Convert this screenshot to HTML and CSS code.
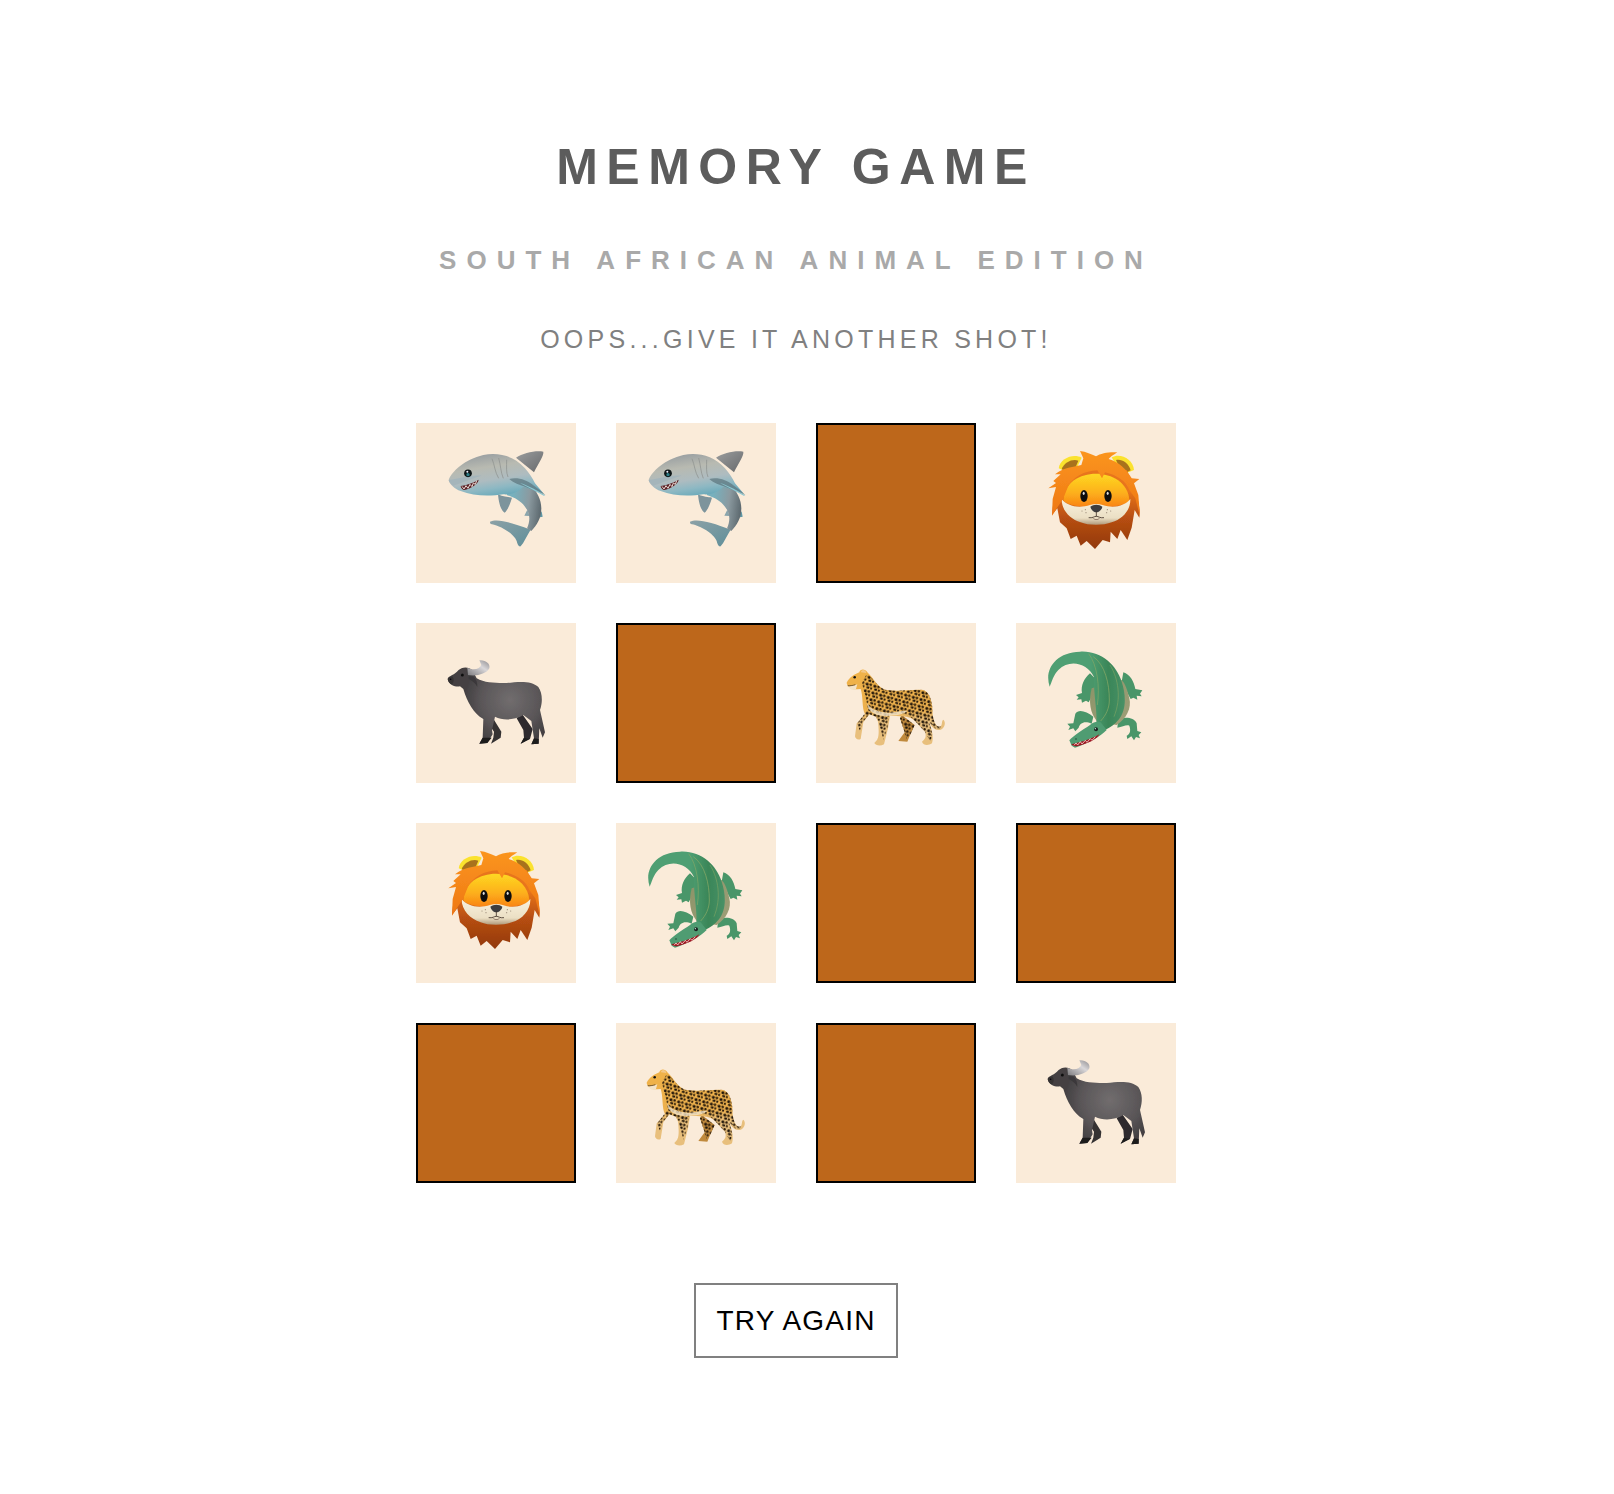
FILE: index.html
```html
<!DOCTYPE html>
<html lang="en">
<head>
<meta charset="utf-8">
<title>Memory Game</title>
<link rel="stylesheet" href="styles.css">
</head>
<body>
<svg class="sprite" xmlns="http://www.w3.org/2000/svg" aria-hidden="true">
  <defs>
    <filter id="soft" x="-5%" y="-5%" width="110%" height="110%"><feGaussianBlur stdDeviation="1"/></filter>
    <linearGradient id="sharkBody" gradientUnits="userSpaceOnUse" x1="220" y1="115" x2="240" y2="245">
      <stop offset="0" stop-color="#989ea1"/><stop offset=".32" stop-color="#b8bab1"/><stop offset=".62" stop-color="#aebcc0"/><stop offset=".82" stop-color="#8db8c3"/><stop offset="1" stop-color="#6caaba"/>
    </linearGradient>
    <linearGradient id="sharkTurn" gradientUnits="userSpaceOnUse" x1="310" y1="250" x2="395" y2="260">
      <stop offset="0" stop-color="#77b0bd"/><stop offset=".55" stop-color="#8b9aa0"/><stop offset="1" stop-color="#5e6a70"/>
    </linearGradient>
    <linearGradient id="sharkFin" x1="0" y1="0" x2="1" y2="1">
      <stop offset="0" stop-color="#9b9d9e"/><stop offset="1" stop-color="#67696b"/>
    </linearGradient>
    <linearGradient id="sharkTail" x1="0" y1="0" x2="1" y2="1">
      <stop offset="0" stop-color="#8ca1a6"/><stop offset="1" stop-color="#5f8f9a"/>
    </linearGradient>
    <linearGradient id="lionUp" x1="0" y1="0" x2="0" y2="1">
      <stop offset="0" stop-color="#fb951f"/><stop offset="1" stop-color="#ee7714"/>
    </linearGradient>
    <linearGradient id="lionLow" gradientUnits="userSpaceOnUse" x1="0" y1="230" x2="0" y2="400">
      <stop offset="0" stop-color="#e8741a"/><stop offset=".45" stop-color="#b84f12"/><stop offset="1" stop-color="#93390e"/>
    </linearGradient>
    <linearGradient id="lionFace" gradientUnits="userSpaceOnUse" x1="0" y1="170" x2="0" y2="285">
      <stop offset="0" stop-color="#fedc22"/><stop offset=".55" stop-color="#fdb01c"/><stop offset="1" stop-color="#f87a12"/>
    </linearGradient>
    <linearGradient id="lionMuzzle" gradientUnits="userSpaceOnUse" x1="0" y1="255" x2="0" y2="332">
      <stop offset="0" stop-color="#f8f0dc"/><stop offset=".7" stop-color="#ebdfc4"/><stop offset="1" stop-color="#a8906f"/>
    </linearGradient>
    <radialGradient id="buffBody" gradientUnits="userSpaceOnUse" cx="300" cy="255" r="135">
      <stop offset="0" stop-color="#716d6e"/><stop offset=".65" stop-color="#5a5658"/><stop offset="1" stop-color="#444143"/>
    </radialGradient>
    <linearGradient id="buffHorn" x1="0" y1="1" x2="1" y2="0">
      <stop offset="0" stop-color="#7d7b7e"/><stop offset=".6" stop-color="#d9d7d9"/><stop offset="1" stop-color="#8d8b8d"/>
    </linearGradient>
    <linearGradient id="leoBody" gradientUnits="userSpaceOnUse" x1="0" y1="170" x2="0" y2="320">
      <stop offset="0" stop-color="#f0b248"/><stop offset=".75" stop-color="#ecb04e"/><stop offset="1" stop-color="#e8bf7c"/>
    </linearGradient>
    <pattern id="leoSpots" width="24" height="21" patternUnits="userSpaceOnUse" patternTransform="rotate(16)">
      <ellipse cx="6" cy="5" rx="4.8" ry="4" fill="#1c1208"/>
      <ellipse cx="17" cy="4" rx="3.6" ry="4.2" fill="#2a1b0a"/>
      <ellipse cx="11" cy="14" rx="4.6" ry="3.6" fill="#1c1208"/>
      <ellipse cx="21" cy="14" rx="3.2" ry="3.6" fill="#2a1b0a"/>
    </pattern>
    <linearGradient id="crocBody" gradientUnits="userSpaceOnUse" x1="240" y1="0" x2="350" y2="0">
      <stop offset="0" stop-color="#4f9f73"/><stop offset=".5" stop-color="#3a8658"/><stop offset="1" stop-color="#4a9268"/>
    </linearGradient>
    <linearGradient id="crocBelly" x1="0" y1="0" x2="1" y2="1">
      <stop offset="0" stop-color="#8a9368"/><stop offset="1" stop-color="#a09f78"/>
    </linearGradient>

    <symbol id="shark" viewBox="18 24 480 480">
      <g filter="url(#soft)">
        <path d="M318 128C340 114 375 106 400 110C402 122 385 145 372 172Z" fill="url(#sharkFin)"/>
        <path d="M264 238C280 246 295 246 306 248C300 268 293 286 284 293C272 286 266 262 264 238Z" fill="#7d949c"/>
        <path d="M343 302L352 284L359 303Z" fill="#8aa5ac"/>
        <path d="M380 288L395 290L398 305L382 308Z" fill="#5e96a4"/>
        <path d="M240 320C262 310 305 322 362 344C352 360 342 382 332 394C326 396 322 388 320 378C312 356 270 332 246 328C241 327 240 324 240 320Z" fill="url(#sharkTail)"/>
        <path d="M300 215C325 225 345 215 360 205C382 232 394 255 394 280C394 310 380 332 364 348L351 340C362 315 360 295 345 275C332 258 315 248 290 240Z" fill="url(#sharkTurn)"/>
        <path d="M116 195C124 170 165 133 220 120C262 112 310 120 345 160C358 175 368 190 375 205L400 235L340 215C325 230 305 240 280 238C240 244 190 244 152 228C134 222 118 208 116 195Z" fill="url(#sharkBody)"/>
        <path d="M298 192C322 186 350 194 372 212C388 224 398 232 406 240C385 232 365 222 345 215C328 209 312 205 298 192Z" fill="#5f7880" opacity=".75"/>
        <path d="M330 204C356 212 384 228 406 241L401 242C378 230 352 216 330 204Z" fill="#8cc6d0"/>
        <path d="M116 195C150 190 190 178 215 182C180 192 150 205 130 212C122 207 117 200 116 195Z" fill="#a4b5bb"/>
        <g fill="none" stroke="#8d928e" stroke-width="2.2">
          <path d="M246 131C254 150 254 170 266 190"/><path d="M266 129C272 150 272 172 280 190"/><path d="M290 134C290 155 288 172 294 186"/>
        </g>
        <circle cx="174" cy="175" r="11.5" fill="#0b1214"/>
        <circle cx="174" cy="179" r="5" fill="#2e7d86"/>
        <circle cx="172" cy="170" r="3" fill="#eef"/>
        <path d="M152 213C170 210 190 204 206 194C204 208 180 222 162 225C157 224 153 219 152 213Z" fill="#5a1d20"/>
        <path d="M156 214L162 222L168 212L174 220L180 208L186 215L190 204L196 208L200 197" fill="none" stroke="#e9dcd6" stroke-width="3"/>
      </g>
    </symbol>

    <symbol id="lion" viewBox="18 24 480 480">
      <g filter="url(#soft)">
        <path d="M146 160C150 130 190 115 215 128L190 180Z" fill="#fbe22e"/>
        <path d="M155 163C162 140 190 130 205 137L188 178Z" fill="#a8721f"/>
        <path d="M372 165C370 132 330 112 305 127L335 180Z" fill="#fbe22e"/>
        <path d="M362 166C356 142 332 130 318 135L338 178Z" fill="#a8721f"/>
        <path d="M126 300C128 270 134 235 165 165L350 165C385 240 392 280 388 308L374 285L365 338L352 375L332 345L322 372L302 350L300 382L278 375L255 402L230 378L212 392L200 362L182 372L170 340L150 322L142 280Z" fill="url(#lionLow)"/>
        <path d="M160 255C165 150 350 150 358 255C350 285 170 285 160 255Z" fill="url(#lionFace)"/>
        <path d="M155 252C170 272 205 282 240 270C252 266 266 266 278 270C312 282 345 272 361 252C362 285 338 312 305 322C280 332 235 332 212 322C180 312 154 285 155 252Z" fill="url(#lionMuzzle)"/>
        <path d="M115 220L138 204L130 198L152 178L135 178C150 165 170 158 190 155L214 150L220 130L210 108C228 110 245 118 258 124C272 114 300 110 322 112C310 120 300 126 296 132C325 140 352 165 365 190L388 192L372 205L385 240L390 305L376 250L358 225C348 198 320 180 285 172L276 190L262 166C222 168 190 185 174 215L160 250L126 302L128 252L138 216Z" fill="url(#lionUp)"/>
        <ellipse cx="222" cy="243" rx="11" ry="18" fill="#111"/>
        <ellipse cx="294" cy="243" rx="11" ry="18" fill="#111"/>
        <ellipse cx="221" cy="235" rx="3" ry="5" fill="#ddd"/>
        <ellipse cx="293" cy="235" rx="3" ry="5" fill="#ddd"/>
        <path d="M241 275C250 267 268 267 277 275C276 284 266 292 259 292C251 292 243 284 241 275Z" fill="#3d3d40"/>
        <path d="M259 290V304M236 308C248 310 252 304 259 304C266 304 270 310 282 308" fill="none" stroke="#2a1b14" stroke-width="2.2"/>
        <path d="M247 309C253 313 265 313 271 309C265 315 253 315 247 309Z" fill="#4a2a22"/>
        <g fill="#9a8a78"><circle cx="216" cy="288" r="1.8"/><circle cx="226" cy="284" r="1.8"/><circle cx="228" cy="293" r="1.8"/><circle cx="290" cy="293" r="1.8"/><circle cx="292" cy="284" r="1.8"/><circle cx="302" cy="288" r="1.8"/></g>
      </g>
    </symbol>

    <symbol id="buffalo" viewBox="18 24 480 480">
      <g filter="url(#soft)">
        <path d="M335 295L368 342L360 372L332 386L342 368L340 345L320 310Z" fill="#2f2c2e"/>
        <path d="M240 295L274 350L272 368L243 386L250 368L252 350L232 320Z" fill="#343133"/>
        <path d="M113 192C116 182 135 180 145 166C155 155 175 154 187 165L200 190C225 205 260 204 290 204C325 200 365 196 385 216C398 235 398 262 390 285L405 352L398 368L388 340L386 386L364 388L372 370L364 318L340 300C315 315 280 318 255 305L246 345L248 358L232 384L208 386L218 368L220 312C190 295 172 262 160 222L150 214C140 216 118 214 113 192Z" fill="url(#buffBody)"/>
        <path d="M113 192C116 186 122 184 128 185C133 192 132 203 126 208C119 206 114 201 113 192Z" fill="#343133"/>
        <path d="M176 184C190 182 202 190 202 215C195 205 188 198 176 192Z" fill="#3b383a"/>
        <path d="M172 158C192 168 208 162 214 150L208 136C226 134 242 146 238 160C228 178 200 184 174 180Z" fill="url(#buffHorn)"/>
        <path d="M208 386L218 368L245 368L232 384ZM332 386L342 368L358 372ZM364 388L372 370L386 372V386Z" fill="#1e1c1e"/>
        <circle cx="157" cy="180" r="4.5" fill="#111"/>
        <circle cx="122" cy="193" r="2.2" fill="#000"/>
      </g>
    </symbol>

    <symbol id="leopard" viewBox="18 24 480 480">
      <g filter="url(#soft)">
        <path d="M275 300L314 330L298 365L292 380L265 378L284 352L270 310Z" fill="#c08a3e"/>
        <path d="M275 300L314 330L298 365L290 372L284 352L270 310Z" fill="url(#leoSpots)"/>
        <path d="M110 203C118 188 130 180 148 172C150 162 165 160 172 172C190 188 200 215 225 224C265 232 305 222 340 225C360 232 368 262 368 300C372 325 382 340 392 334C398 326 394 318 400 314C408 320 406 340 390 345C372 348 362 330 355 318C365 340 372 365 366 385C355 392 340 392 336 380C345 372 350 365 345 350L312 315C295 300 265 305 240 302L234 340L222 388C212 394 196 392 193 384C202 374 210 372 204 320L198 305L178 298L160 322L152 372C144 376 136 372 135 364L140 325L165 298C155 280 160 245 152 222C140 222 128 226 118 218C114 212 110 208 110 203Z" fill="url(#leoBody)"/>
        <path d="M170 288C175 262 162 232 156 205C162 190 168 178 174 178C190 190 200 215 225 224C265 232 305 222 340 225C360 232 368 262 368 300C372 325 382 340 392 334C396 340 385 345 375 340L355 318C365 340 372 365 360 378L345 350L312 315C295 296 265 292 238 298L232 340L220 374L206 320L198 305L178 298L158 322L150 350L142 325Z" fill="url(#leoSpots)"/>
        <path d="M115 215C125 212 135 212 142 208L138 222C130 228 118 222 115 215Z" fill="#f3e3c8"/>
        <path d="M113 212C122 213 130 211 136 209" stroke="#3c2b1a" stroke-width="2" fill="none"/>
        <path d="M153 172C153 162 167 162 169 174Z" fill="#f2c88a"/>
        <circle cx="134" cy="187" r="3.8" fill="#111"/>
        <path d="M172 265C180 283 205 292 238 294C262 292 278 286 292 288C275 302 235 306 202 300C184 294 172 282 172 265Z" fill="#f3e3c8" opacity=".8"/>
      </g>
    </symbol>

    <symbol id="croc" viewBox="18 24 480 480">
      <g filter="url(#soft)">
        <path d="M340 172C360 178 372 200 376 222L397 226L390 236L395 244L380 242L382 254L370 248L362 252C352 235 345 215 335 200Z" fill="#4a9669"/>
        <path d="M240 175C222 190 212 212 216 234L198 240L206 247L200 254L214 253L216 263L228 257L236 262C248 240 258 220 265 200Z" fill="#4a9669"/>
        <path d="M250 305C228 288 205 282 196 296L190 325L172 326L180 335L175 345L190 340L196 349L206 338C210 325 222 316 245 326Z" fill="#4a9669"/>
        <path d="M325 312C345 306 372 306 380 325L382 348L394 352L386 360L390 370L378 366L372 376L364 364L352 372L350 362C358 358 364 350 358 332C350 328 338 335 322 338Z" fill="#4a9669"/>
        <path d="M245 220C235 260 240 295 262 320L320 330C350 310 365 280 358 250C352 225 345 205 335 195Z" fill="url(#crocBelly)"/>
        <path d="M119 215C102 165 135 112 210 110C272 106 320 150 335 200C348 240 350 285 325 315C315 328 300 338 285 345L258 330C264 295 250 240 252 186C232 145 180 130 145 165C130 180 126 200 119 215Z" fill="url(#crocBody)"/>
        <path d="M178 376C190 362 218 345 240 330C250 322 262 318 272 322L290 345C270 365 235 385 195 398L185 392Z" fill="#4f9c72"/>
        <path d="M250 125C285 150 298 205 298 255C298 280 288 300 272 318" fill="none" stroke="#86a865" stroke-width="3" opacity=".75"/>
        <path d="M236 116C262 150 270 215 262 270" fill="none" stroke="#86a865" stroke-width="3" opacity=".65"/>
        <path d="M300 150C325 190 335 250 312 305" fill="none" stroke="#86a865" stroke-width="3" opacity=".55"/>
        <path d="M184 388C210 382 245 372 268 358C262 372 235 386 206 392C198 395 190 394 184 388Z" fill="#a31422"/>
        <path d="M192 391L198 384L203 390L211 380L216 387L226 376L231 382L241 371L246 376L256 365" fill="none" stroke="#f2e6d8" stroke-width="2.4"/>
        <circle cx="258" cy="343" r="6" fill="#1c2220"/>
        <circle cx="256" cy="341" r="1.8" fill="#dfe"/>
        <circle cx="198" cy="372" r="2.2" fill="#1f4a32"/>
      </g>
    </symbol>
  </defs>
</svg>

<main class="game">
  <h1 class="title">MEMORY GAME</h1>
  <h2 class="subtitle">SOUTH AFRICAN ANIMAL EDITION</h2>
  <p class="status">OOPS...GIVE IT ANOTHER SHOT!</p>

  <div class="board">
    <div class="card"><svg class="animal"><use href="#shark"/></svg></div>
    <div class="card"><svg class="animal"><use href="#shark"/></svg></div>
    <div class="card card-back"></div>
    <div class="card"><svg class="animal"><use href="#lion"/></svg></div>

    <div class="card"><svg class="animal"><use href="#buffalo"/></svg></div>
    <div class="card card-back"></div>
    <div class="card"><svg class="animal"><use href="#leopard"/></svg></div>
    <div class="card"><svg class="animal"><use href="#croc"/></svg></div>

    <div class="card"><svg class="animal"><use href="#lion"/></svg></div>
    <div class="card"><svg class="animal"><use href="#croc"/></svg></div>
    <div class="card card-back"></div>
    <div class="card card-back"></div>

    <div class="card card-back"></div>
    <div class="card"><svg class="animal"><use href="#leopard"/></svg></div>
    <div class="card card-back"></div>
    <div class="card"><svg class="animal"><use href="#buffalo"/></svg></div>
  </div>

  <button class="retry" type="button">TRY AGAIN</button>
</main>
</body>
</html>
```

FILE: styles.css
```css
* {
  box-sizing: border-box;
}

html,
body {
  margin: 0;
  padding: 0;
  background: #fff;
}

body {
  font-family: "Liberation Sans", Arial, sans-serif;
}

.sprite {
  display: block;
  width: 0;
  height: 0;
  overflow: hidden;
}

.game {
  width: 1592px;
  min-height: 1494px;
  padding-top: 137px;
  display: flex;
  flex-direction: column;
  align-items: center;
  text-align: center;
}

.title {
  margin: 0;
  font-size: 50px;
  line-height: 60px;
  font-weight: 700;
  letter-spacing: 8.5px;
  color: #5c5c5c;
}

.subtitle {
  margin: 33px 0 0;
  font-size: 26px;
  line-height: 60px;
  font-weight: 700;
  letter-spacing: 10px;
  color: #a9a9a9;
}

.status {
  margin: 35px 0 0;
  font-size: 25px;
  line-height: 28px;
  letter-spacing: 4.25px;
  color: #808080;
}

.board {
  margin-top: 70px;
  display: grid;
  grid-template-columns: repeat(4, 160px);
  grid-auto-rows: 160px;
  gap: 40px;
}

.card {
  background: #faebd9;
}

.card-back {
  background: #bd671b;
  border: 2px solid #000;
}

.animal {
  display: block;
  width: 160px;
  height: 160px;
}

.retry {
  margin-top: 100px;
  width: 204px;
  height: 75px;
  padding: 0;
  background: #fff;
  border: 2px solid #808080;
  font-family: inherit;
  font-size: 28px;
  letter-spacing: 1.2px;
  color: #000;
}
```
